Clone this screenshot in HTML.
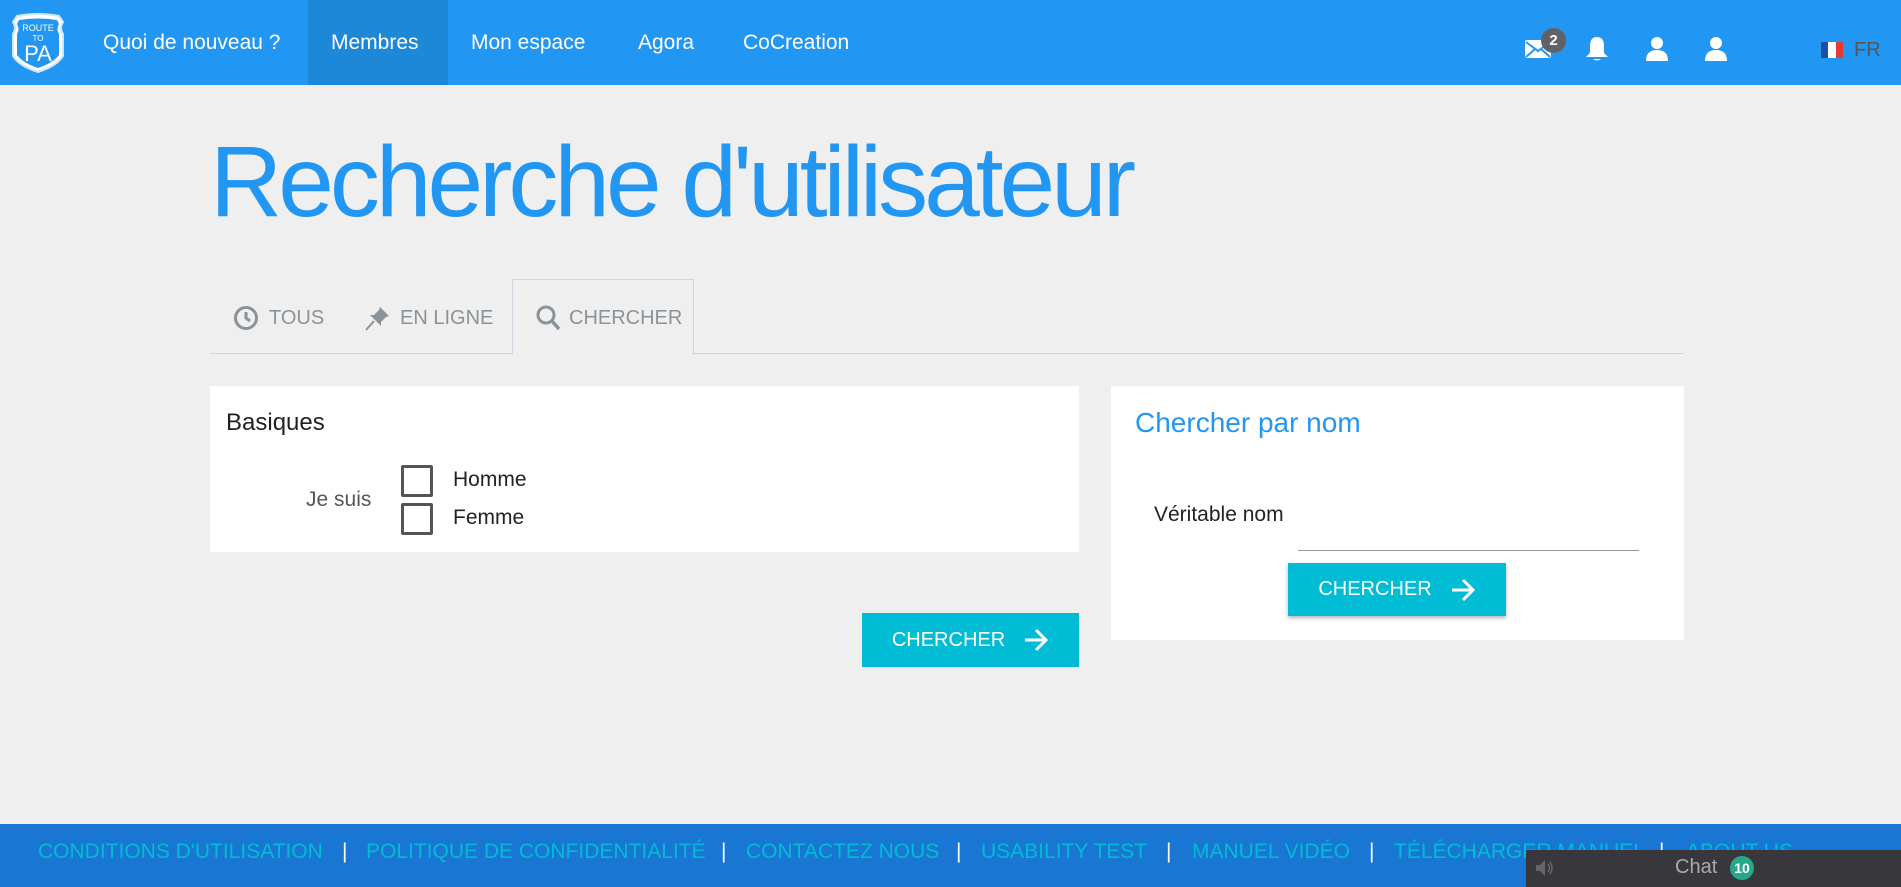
<!DOCTYPE html>
<html><head><meta charset="utf-8"><style>
*{box-sizing:border-box;margin:0;padding:0}
body{width:1901px;height:887px;background:#efefef;font-family:"Liberation Sans",sans-serif;position:relative;overflow:hidden}
.a{position:absolute;white-space:nowrap}
.nav{position:absolute;left:0;top:0;width:1901px;height:85px;background:#2196f3}
.ni{position:absolute;top:0;height:85px;line-height:85px;color:#fff;font-size:21px}
.tab{color:#8a9399;font-size:20px;top:307px}
.btn{position:absolute;background:#00bcd4;color:#fff;font-size:20px;display:flex;align-items:center;justify-content:center;gap:18px}
.fl{color:#00bcd4;font-size:21px;top:840px}
.sep{color:#fff;font-size:21px;top:840px}
</style></head><body>
<div class="nav"></div>
<div class="a" style="left:308px;top:0;width:140px;height:85px;background:#1e88d8"></div>
<svg class="a" style="left:7px;top:12px" width="62" height="62" viewBox="0 0 62 62">
<path d="M10 4 Q31 0 52 4 L56 10 Q52 16 56 22 L56 44 Q50 54 31 60 Q12 54 6 44 L6 22 Q10 16 6 10 Z" fill="#fff" stroke="#cfe6fb" stroke-width="2"/>
<path d="M12 8 Q31 5 50 8 L52 12 Q49 17 52 22 L52 43 Q46 51 31 56 Q16 51 10 43 L10 22 Q13 17 10 12 Z" fill="#2196f3"/>
<text x="31" y="19" font-size="9" fill="#fff" text-anchor="middle" font-family="Liberation Sans">ROUTE</text>
<text x="31" y="29" font-size="8" fill="#fff" text-anchor="middle" font-family="Liberation Sans">TO</text>
<text x="31" y="49" font-size="22" fill="#fff" text-anchor="middle" font-family="Liberation Sans">PA</text>
</svg>
<div class="ni" style="left:103px">Quoi de nouveau ?</div>
<div class="ni" style="left:331px">Membres</div>
<div class="ni" style="left:471px">Mon espace</div>
<div class="ni" style="left:638px">Agora</div>
<div class="ni" style="left:743px">CoCreation</div>
<svg class="a" style="left:1525px;top:40px" width="26" height="18" viewBox="0 0 26 18"><rect x="0" y="0" width="26" height="18" rx="2" fill="#fff"/><path d="M1 2 L13 11 L25 2 M1 17 L10 9 M25 17 L16 9" stroke="#2196f3" stroke-width="2" fill="none"/></svg>
<div class="a" style="left:1541px;top:28px;width:25px;height:25px;border-radius:50%;background:#5f6368;color:#fff;font-size:15px;font-weight:bold;text-align:center;line-height:25px">2</div>
<svg class="a" style="left:1585px;top:36px" width="24" height="26" viewBox="0 0 24 26"><path d="M12 1 Q5 1 5 10 L5 17 L1 21 L23 21 L19 17 L19 10 Q19 1 12 1Z" fill="#fff"/><path d="M8 23 Q12 26 16 23Z" fill="#fff"/></svg>
<svg class="a" style="left:1646px;top:36px" width="22" height="26" viewBox="0 0 22 26"><circle cx="11" cy="7" r="6" fill="#fff"/><path d="M0 25 Q0 14 11 14 Q22 14 22 25Z" fill="#fff"/></svg>
<svg class="a" style="left:1705px;top:36px" width="22" height="26" viewBox="0 0 22 26"><circle cx="11" cy="7" r="6" fill="#fff"/><path d="M0 25 Q0 14 11 14 Q22 14 22 25Z" fill="#fff"/></svg>
<div class="a" style="left:1821px;top:42px;width:22px;height:16px;display:flex"><div style="flex:1;background:#1e4fa0"></div><div style="flex:1;background:#fff"></div><div style="flex:1;background:#e53935"></div></div>
<div class="a" style="left:1854px;top:39px;font-size:20px;color:#555">FR</div>

<div class="a" style="left:210px;top:125px;font-size:100px;color:#2196f3;letter-spacing:-4px;font-weight:300">Recherche d'utilisateur</div>

<div class="a" style="left:210px;top:353px;width:1474px;height:1px;background:#cdd6e0"></div>
<div class="a" style="left:512px;top:279px;width:182px;height:76px;border:1px solid #cdd6e0;border-bottom:none;background:#efefef"></div>
<svg class="a" style="left:233px;top:305px" width="26" height="26" viewBox="0 0 26 26"><circle cx="13" cy="13" r="10.5" fill="none" stroke="#8a9399" stroke-width="3"/><path d="M13 7 L13 13 L17 16" stroke="#8a9399" stroke-width="3" fill="none"/></svg>
<div class="a tab" style="left:269px">TOUS</div>
<svg class="a" style="left:365px;top:305px" width="26" height="26" viewBox="0 0 26 26"><path d="M15 2 L24 11 L21 12 L16 17 L16 21 L5 10 L9 10 L14 5 Z" fill="#8a9399"/><path d="M9 16 L1 25" stroke="#8a9399" stroke-width="2"/></svg>
<div class="a tab" style="left:400px">EN LIGNE</div>
<svg class="a" style="left:535px;top:304px" width="26" height="28" viewBox="0 0 26 28"><circle cx="11" cy="11" r="8" fill="none" stroke="#8a9399" stroke-width="3"/><path d="M17 17 L24 25" stroke="#8a9399" stroke-width="3.5"/></svg>
<div class="a tab" style="left:569px">CHERCHER</div>

<div class="a" style="left:210px;top:386px;width:869px;height:166px;background:#fff"></div>
<div class="a" style="left:226px;top:409px;font-size:24px;color:#222">Basiques</div>
<div class="a" style="left:306px;top:488px;font-size:21px;color:#555">Je suis</div>
<div class="a" style="left:401px;top:465px;width:32px;height:32px;border:3px solid #555;border-radius:2px"></div>
<div class="a" style="left:401px;top:503px;width:32px;height:32px;border:3px solid #555;border-radius:2px"></div>
<div class="a" style="left:453px;top:468px;font-size:21px;color:#222">Homme</div>
<div class="a" style="left:453px;top:506px;font-size:21px;color:#222">Femme</div>
<div class="btn" style="left:862px;top:613px;width:217px;height:54px">CHERCHER <svg width="26" height="24" viewBox="0 0 26 24"><path d="M2 12 H23 M13 2 L23 12 L13 22" stroke="#fff" stroke-width="3" fill="none"/></svg></div>

<div class="a" style="left:1111px;top:386px;width:573px;height:254px;background:#fff"></div>
<div class="a" style="left:1135px;top:407px;font-size:28px;color:#2196f3">Chercher par nom</div>
<div class="a" style="left:1154px;top:503px;font-size:21px;color:#222">Véritable nom</div>
<div class="a" style="left:1298px;top:550px;width:341px;height:1px;background:#999"></div>
<div class="btn" style="left:1288px;top:563px;width:218px;height:53px;box-shadow:0 2px 4px rgba(0,0,0,.3)">CHERCHER <svg width="26" height="24" viewBox="0 0 26 24"><path d="M2 12 H23 M13 2 L23 12 L13 22" stroke="#fff" stroke-width="3" fill="none"/></svg></div>

<div class="a" style="left:0;top:824px;width:1901px;height:63px;background:#1976d2"></div>
<div class="a fl" style="left:38px">CONDITIONS D'UTILISATION</div>
<div class="a sep" style="left:342px">|</div>
<div class="a fl" style="left:366px">POLITIQUE DE CONFIDENTIALITÉ</div>
<div class="a sep" style="left:721px">|</div>
<div class="a fl" style="left:746px">CONTACTEZ NOUS</div>
<div class="a sep" style="left:956px">|</div>
<div class="a fl" style="left:981px">USABILITY TEST</div>
<div class="a sep" style="left:1166px">|</div>
<div class="a fl" style="left:1192px">MANUEL VIDÉO</div>
<div class="a sep" style="left:1369px">|</div>
<div class="a fl" style="left:1394px">TÉLÉCHARGER MANUEL</div>
<div class="a sep" style="left:1659px">|</div>
<div class="a fl" style="left:1686px">ABOUT US</div>
<div class="a" style="left:1526px;top:850px;width:375px;height:37px;background:#38373c"></div>
<svg class="a" style="left:1535px;top:859px" width="20" height="18" viewBox="0 0 20 18"><path d="M1 6 H5 L10 1 V17 L5 12 H1Z" fill="#666"/><path d="M13 5 Q16 9 13 13 M15 3 Q19 9 15 15" stroke="#666" stroke-width="1.5" fill="none"/></svg>
<div class="a" style="left:1675px;top:856px;font-size:20px;color:#aaa">Chat</div>
<div class="a" style="left:1730px;top:856px;width:24px;height:24px;border-radius:50%;background:#26a98b;color:#fff;font-size:14px;font-weight:bold;text-align:center;line-height:24px">10</div>
</body></html>
